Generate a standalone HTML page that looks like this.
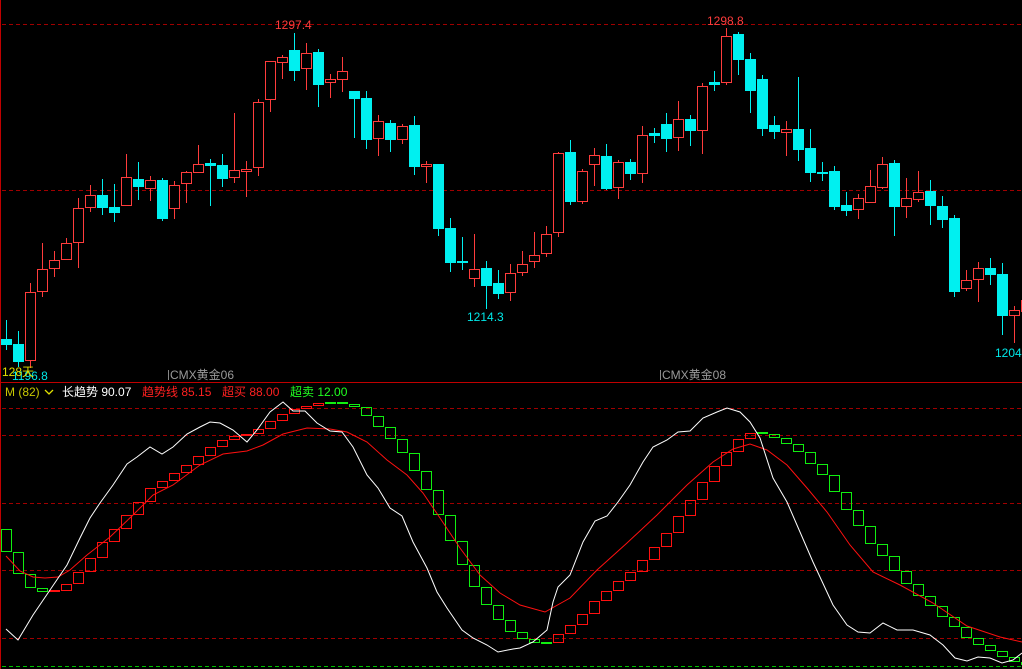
<!DOCTYPE html>
<html><head><meta charset="utf-8"><style>
html,body{margin:0;padding:0;background:#000;width:1022px;height:669px;overflow:hidden}
svg{display:block}
text{font-family:"Liberation Sans","Noto Sans CJK SC",sans-serif;font-size:12px}
</style></head><body>
<svg id="s" width="1022" height="669" xmlns="http://www.w3.org/2000/svg">
<rect width="1022" height="669" fill="#000"/>
<g stroke="#a00000" stroke-width="1" stroke-dasharray="4,3">
<line x1="2" y1="24.5" x2="1022" y2="24.5"/>
<line x1="2" y1="190.5" x2="1022" y2="190.5"/>
<line x1="2" y1="408.5" x2="1022" y2="408.5"/>
<line x1="2" y1="435.5" x2="1022" y2="435.5"/>
<line x1="2" y1="503.5" x2="1022" y2="503.5"/>
<line x1="2" y1="570.5" x2="1022" y2="570.5"/>
<line x1="2" y1="638.5" x2="1022" y2="638.5"/>
</g>
<line x1="2" y1="666.5" x2="1022" y2="666.5" stroke="#00c000" stroke-dasharray="4,3"/>
<line x1="0.5" y1="0" x2="0.5" y2="669" stroke="#c00000"/>
<line x1="0" y1="382.5" x2="1022" y2="382.5" stroke="#c00000"/>
<g id="candles"></g>
<g id="boxes"></g>
<polyline fill="none" stroke="#ff1010" stroke-width="1" points="6,556 20,571 33,577 45,578 58,577 70,570 87,555 110,537 133,515 153,495 173,485 200,465 223,454 247,451 263,445 283,434 307,428 330,429 347,432 367,442 387,460 407,475 423,493 440,518 460,548 480,575 500,593 520,605 545,612 570,598 597,570 627,543 657,515 687,485 713,462 733,449 750,444 767,450 787,465 807,488 827,512 850,545 873,572 900,585 933,603 967,626 1000,637 1022,642"/>
<polyline fill="none" stroke="#ffffff" stroke-width="1" points="6,629 18,640 33,615 50,590 67,565 80,538 90,518 100,503 113,485 127,464 137,457 150,447 162,454 173,447 187,434 200,427 210,422 220,423 233,430 247,442 257,430 270,412 283,402 293,411 305,411 317,423 330,431 342,432 353,447 367,475 378,488 390,508 402,516 413,542 427,568 437,592 447,608 462,630 473,638 487,645 498,652 513,649 520,648 533,642 547,630 553,602 558,587 570,575 583,542 595,521 607,516 618,502 630,485 643,462 653,447 667,440 678,432 690,431 703,418 717,412 727,408 740,412 750,422 760,438 773,478 787,502 800,532 813,562 833,605 847,625 858,632 870,633 883,623 897,630 913,630 930,635 943,645 955,658 967,661 978,657 990,658 1002,663 1013,660 1022,653"/>
<text x="275" y="29" fill="#ff3c3c">1297.4</text>
<text x="707" y="25" fill="#ff3c3c">1298.8</text>
<text x="467" y="321" fill="#00e8e8">1214.3</text>
<text x="995" y="357" fill="#00e8e8">1204</text>
<text x="12" y="380" fill="#00e8e8">1196.8</text>
<text x="2" y="376" fill="#e0e000">128天</text>
<line x1="168.5" y1="370" x2="168.5" y2="380" stroke="#888"/>
<text x="170" y="379" fill="#999">CMX黄金06</text>
<line x1="660.5" y1="370" x2="660.5" y2="380" stroke="#888"/>
<text x="662" y="379" fill="#999">CMX黄金08</text>
<text x="5" y="396" fill="#c8c800">M (82)</text>
<polyline points="45,390 49,394 53,390" fill="none" stroke="#e0e000" stroke-width="1.3"/>
<text x="62" y="396" fill="#ffffff">长趋势 90.07</text>
<text x="142" y="396" fill="#ff2020">趋势线 85.15</text>
<text x="222" y="396" fill="#ff2020">超买 88.00</text>
<text x="290" y="396" fill="#20ff20">超卖 12.00</text>
</svg>
<script>
var C=[
"C 339 345 320 350","C 344 362 331 367","R 292 361 283 368","R 269 292 243 297","R 260 269 251 277","R 243 260 238 260","R 208 243 198 268","R 195 208 185 212","C 195 208 179 215","C 207 213 184 222",
"R 177 206 154 206","C 179 187 162 200","R 180 189 176 201","C 180 219 178 221","R 185 209 181 219","R 172 184 171 203","R 164 173 145 173","C 163 166 159 206","C 165 179 154 187","R 170 178 113 183",
"R 169 172 161 197","R 102 168 99 176","R 61 100 61 112","R 57 63 55 79","C 50 71 33 81","R 53 69 43 90","C 52 85 49 107","R 79 83 74 98","R 71 80 57 92","C 91 99 91 138",
"C 98 140 91 149","R 121 139 115 156","C 123 140 120 152","R 126 140 124 144","C 125 167 116 175","R 164 167 161 183","C 164 229 164 236","C 228 263 218 272","C 261 263 237 270","R 269 279 234 287",
"C 268 286 261 309","C 283 294 270 299","R 273 293 264 301","R 264 273 251 276","R 255 262 232 268","R 234 254 226 257","R 153 233 152 237","C 152 202 140 205","R 171 202 169 204","R 155 165 148 186",
"C 156 189 144 190","R 162 188 160 199","C 162 174 159 180","R 135 174 126 183","C 133 136 128 143","C 124 139 113 152","R 119 138 101 151","C 119 131 115 146","R 86 131 83 154","C 82 85 71 91",
"R 36 83 28 85","C 34 60 32 75","C 59 91 53 113","C 79 129 75 136","C 125 132 116 139","R 129 133 121 156","C 129 150 77 161","C 148 173 129 182","C 172 174 162 181","C 171 207 166 210",
"C 205 211 192 216","R 198 210 194 219","R 186 203 170 203","R 164 188 157 189","C 163 207 160 236","R 198 207 178 218","R 192 200 171 202","C 191 206 180 225","C 206 220 196 228","C 218 292 215 297",
"R 280 289 270 291","R 268 280 262 302","C 268 275 258 285","C 274 316 263 335","R 310 316 306 343","R 300 312 296 320"];
var V=[529,552,574,588,592,591,584,572,558,542,529,515,502,488,481,473,465,456,447,440,436,434,429,421,414,409,406,403,403,404,407,416,427,439,453,471,490,515,541,565,587,605,620,632,639,643,643,634,625,614,601,591,581,572,560,547,533,516,500,482,466,452,439,433,434,438,444,452,464,475,492,510,526,544,556,571,584,596,606,617,627,638,645,651,657,662,665];
var ns="http://www.w3.org/2000/svg",g=document.getElementById("candles"),b=document.getElementById("boxes");
function el(p,t,a){var e=document.createElementNS(ns,t);for(var k in a)e.setAttribute(k,a[k]);p.appendChild(e);}
C.forEach(function(s,i){var a=s.split(" "),c=6+12*i,t=+a[1],bt=+a[2],h=+a[3],l=+a[4];
 if(a[0]=="C"){el(g,"line",{x1:c+.5,x2:c+.5,y1:h,y2:l,stroke:"#00f0f0"});el(g,"rect",{x:c-5,y:t,width:11,height:Math.max(2,bt-t),fill:"#00f0f0"});}
 else{el(g,"line",{x1:c+.5,x2:c+.5,y1:h,y2:l,stroke:"#ff3c3c"});el(g,"rect",{x:c-4.5,y:t+.5,width:10,height:Math.max(1,bt-t-1),fill:"#000",stroke:"#ff3c3c"});}
});
for(var k=0;k<V.length-1;k++){var c=6+12*k,p=V[k],q=V[k+1],col=q<p?"#ff1010":"#10ee10";var t=Math.min(p,q),h=Math.abs(q-p);
 if(h<2){el(b,"rect",{x:c-5,y:t-1,width:11,height:2,fill:col});}
 else el(b,"rect",{x:c-4.5,y:t+.5,width:10,height:h-1,fill:"none",stroke:col});}
</script>
</body></html>
